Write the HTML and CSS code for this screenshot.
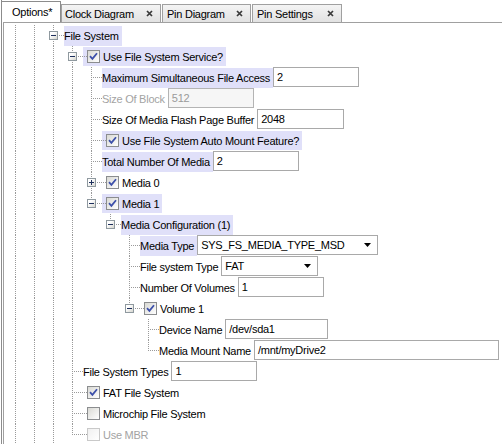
FILE: index.html
```html
<!DOCTYPE html>
<html>
<head>
<meta charset="utf-8">
<link rel="stylesheet" href="styles.css">
</head>
<body>
<div class="frame">
  <div class="tabs">
    <div class="tab active">Options*</div>
    <div class="tab w-clock">Clock Diagram<svg class="close" viewBox="0 0 7 7"><path d="M1 1L6 6M6 1L1 6"/></svg></div>
    <div class="tab w-pind">Pin Diagram<svg class="close" viewBox="0 0 7 7"><path d="M1 1L6 6M6 1L1 6"/></svg></div>
    <div class="tab w-pins">Pin Settings<svg class="close" viewBox="0 0 7 7"><path d="M1 1L6 6M6 1L1 6"/></svg></div>
  </div>
  <div class="panel">
    <div class="row"><span class="c v"></span><span class="c v"></span><span class="c t"><i class="x"></i></span><span class="lbl hl">File System</span></div>
    <div class="row"><span class="c v"></span><span class="c v"></span><span class="c v"></span><span class="c t"><i class="x"></i></span><span class="lbl ck hl"><span class="cb on"><svg viewBox="0 0 11 11"><path d="M2 5.2L4.4 7.8L9 2.2"/></svg></span>Use File System Service?</span></div>
    <div class="row"><span class="c v"></span><span class="c v"></span><span class="c v"></span><span class="c v"></span><span class="c t"></span><span class="lbl hl">Maximum Simultaneous File Access</span><span class="inp w86">2</span></div>
    <div class="row"><span class="c v"></span><span class="c v"></span><span class="c v"></span><span class="c v"></span><span class="c t"></span><span class="lbl dis">Size Of Block</span><span class="inp w85 dis-inp">512</span></div>
    <div class="row"><span class="c v"></span><span class="c v"></span><span class="c v"></span><span class="c v"></span><span class="c t"></span><span class="lbl">Size Of Media Flash Page Buffer</span><span class="inp w87">2048</span></div>
    <div class="row"><span class="c v"></span><span class="c v"></span><span class="c v"></span><span class="c v"></span><span class="c t"></span><span class="lbl ck hl"><span class="cb on"><svg viewBox="0 0 11 11"><path d="M2 5.2L4.4 7.8L9 2.2"/></svg></span>Use File System Auto Mount Feature?</span></div>
    <div class="row"><span class="c v"></span><span class="c v"></span><span class="c v"></span><span class="c v"></span><span class="c t"></span><span class="lbl hl">Total Number Of Media</span><span class="inp w86">2</span></div>
    <div class="row"><span class="c v"></span><span class="c v"></span><span class="c v"></span><span class="c v"></span><span class="c t"><i class="x plus"></i></span><span class="lbl ck"><span class="cb on"><svg viewBox="0 0 11 11"><path d="M2 5.2L4.4 7.8L9 2.2"/></svg></span>Media 0</span></div>
    <div class="row"><span class="c v"></span><span class="c v"></span><span class="c v"></span><span class="c v"></span><span class="c l"><i class="x"></i></span><span class="lbl ck hl"><span class="cb on"><svg viewBox="0 0 11 11"><path d="M2 5.2L4.4 7.8L9 2.2"/></svg></span>Media 1</span></div>
    <div class="row"><span class="c v"></span><span class="c v"></span><span class="c v"></span><span class="c v"></span><span class="c"></span><span class="c l"><i class="x"></i></span><span class="lbl hl">Media Configuration (1)</span></div>
    <div class="row"><span class="c v"></span><span class="c v"></span><span class="c v"></span><span class="c v"></span><span class="c"></span><span class="c"></span><span class="c t"></span><span class="lbl hl">Media Type</span><span class="inp sel w181">SYS_FS_MEDIA_TYPE_MSD<svg class="arr" viewBox="0 0 7 4"><path d="M0 0H7L3.5 4Z"/></svg></span></div>
    <div class="row"><span class="c v"></span><span class="c v"></span><span class="c v"></span><span class="c v"></span><span class="c"></span><span class="c"></span><span class="c t"></span><span class="lbl">File system Type</span><span class="inp sel w97">FAT<svg class="arr" viewBox="0 0 7 4"><path d="M0 0H7L3.5 4Z"/></svg></span></div>
    <div class="row"><span class="c v"></span><span class="c v"></span><span class="c v"></span><span class="c v"></span><span class="c"></span><span class="c"></span><span class="c t"></span><span class="lbl">Number Of Volumes</span><span class="inp w86">1</span></div>
    <div class="row"><span class="c v"></span><span class="c v"></span><span class="c v"></span><span class="c v"></span><span class="c"></span><span class="c"></span><span class="c l"><i class="x"></i></span><span class="lbl ck"><span class="cb on"><svg viewBox="0 0 11 11"><path d="M2 5.2L4.4 7.8L9 2.2"/></svg></span>Volume 1</span></div>
    <div class="row"><span class="c v"></span><span class="c v"></span><span class="c v"></span><span class="c v"></span><span class="c"></span><span class="c"></span><span class="c"></span><span class="c t"></span><span class="lbl">Device Name</span><span class="inp w103">/dev/sda1</span></div>
    <div class="row"><span class="c v"></span><span class="c v"></span><span class="c v"></span><span class="c v"></span><span class="c"></span><span class="c"></span><span class="c"></span><span class="c l"></span><span class="lbl">Media Mount Name</span><span class="inp w245">/mnt/myDrive2</span></div>
    <div class="row"><span class="c v"></span><span class="c v"></span><span class="c v"></span><span class="c t"></span><span class="lbl">File System Types</span><span class="inp w86">1</span></div>
    <div class="row"><span class="c v"></span><span class="c v"></span><span class="c v"></span><span class="c t"></span><span class="lbl ck"><span class="cb on"><svg viewBox="0 0 11 11"><path d="M2 5.2L4.4 7.8L9 2.2"/></svg></span>FAT File System</span></div>
    <div class="row"><span class="c v"></span><span class="c v"></span><span class="c v"></span><span class="c t"></span><span class="lbl ck"><span class="cb"></span>Microchip File System</span></div>
    <div class="row"><span class="c v"></span><span class="c v"></span><span class="c v"></span><span class="c l"></span><span class="lbl ck dis"><span class="cb off"></span>Use MBR</span></div>
  </div>
</div>
</body>
</html>
```
FILE: styles.css
```css
* { box-sizing: border-box; }
html, body { margin: 0; padding: 0; background: #fff; }
body {
  font-family: "Liberation Sans", Arial, sans-serif;
  font-size: 11px;
  letter-spacing: -0.25px;
  color: #000;
  overflow: hidden;
}
.frame {
  margin-left: 1px;
  border-left: 1px solid #8c8c8c;
  height: 444px;
  display: flex;
  flex-direction: column;
}
.tabs {
  display: flex;
  height: 22px;
  flex: none;
}
.tab {
  display: flex;
  align-items: center;
  flex: none;
  margin-top: 4px;
  height: 18px;
  padding-left: 3px;
  border: 1px solid #a0a0a0;
  border-bottom: none;
  background: linear-gradient(#f4f4f4, #e2e2e2);
  white-space: nowrap;
}
.tab + .tab { margin-left: 1px; }
.tab.active + .tab { margin-left: 0; }
.tab.active {
  margin-top: 1px;
  height: 21px;
  width: 59px;
  padding-left: 10px;
  border-left: none;
  border-color: #8c8c8c;
  background: #fff;
}
.w-clock { width: 100px; }
.w-pind { width: 89px; padding-left: 4px; }
.w-pins { width: 90px; padding-left: 4px; }
.close {
  width: 7px;
  height: 7px;
  margin-left: auto;
  margin-right: 7px;
  fill: none;
  stroke: #3a3a3a;
  stroke-width: 1.7;
}
.panel {
  flex: 1;
  margin-left: 1px;
  border-left: 1px solid #a0a0a0;
  border-top: 1px solid #a0a0a0;
  padding: 2px 0 0 3px;
}
.row {
  display: flex;
  align-items: center;
  height: 21px;
  white-space: nowrap;
}
.c {
  flex: none;
  position: relative;
  width: 19px;
  height: 21px;
}
.c.v::before, .c.t::before, .c.l::before {
  content: "";
  position: absolute;
  left: 8px;
  top: 0;
  width: 1px;
  height: 21px;
  background: repeating-linear-gradient(to bottom, #9a9a9a 0 1px, transparent 1px 2px);
}
.c.l::before { height: 11px; }
.c.t::after, .c.l::after {
  content: "";
  position: absolute;
  left: 9px;
  top: 10px;
  width: 10px;
  height: 1px;
  background: repeating-linear-gradient(to right, transparent 0 1px, #9a9a9a 1px 2px);
}
.x {
  position: absolute;
  z-index: 1;
  left: 4px;
  top: 6px;
  width: 9px;
  height: 9px;
  border: 1px solid #8f999f;
  background: linear-gradient(135deg, #ffffff 30%, #d6d6cf);
}
.x::before {
  content: "";
  position: absolute;
  left: 1px;
  top: 3px;
  width: 5px;
  height: 1px;
  background: #1d2f5c;
}
.x.plus::after {
  content: "";
  position: absolute;
  left: 3px;
  top: 1px;
  width: 1px;
  height: 5px;
  background: #1d2f5c;
}
.lbl {
  display: flex;
  align-items: center;
  height: 20px;
  padding-right: 3px;
}
.lbl.ck {
  position: relative;
  padding-left: 4px;
  height: 19px;
}
.lbl.ck::before {
  content: "";
  position: absolute;
  left: 0;
  top: 9px;
  width: 4px;
  height: 1px;
  background: repeating-linear-gradient(to right, transparent 0 1px, #9a9a9a 1px 2px);
}
.hl { background: #e0e0f9; }
.dis { color: #a3a3a3; }
.cb {
  flex: none;
  width: 13px;
  height: 13px;
  margin-right: 3px;
  border: 1px solid #8b8d8f;
  background: linear-gradient(135deg, #d9d9d4, #ffffff);
  display: flex;
}
.cb svg {
  width: 11px;
  height: 11px;
  fill: none;
  stroke: #3d50aa;
  stroke-width: 1.8;
}
.cb.off {
  border-color: #c9c9c9;
  background: linear-gradient(135deg, #f0f0f0, #ffffff);
}
.inp {
  flex: none;
  align-self: flex-start;
  display: flex;
  align-items: center;
  height: 20px;
  padding-left: 3px;
  border: 1px solid #a9a9a9;
  background: #fff;
}
.dis-inp { color: #9a9a9a; background: #f6f6f6; border-color: #b4b4b4; }
.sel { position: relative; }
.arr {
  width: 7px;
  height: 4px;
  margin-left: auto;
  margin-right: 6px;
  fill: #000;
}
.w85 { width: 86px; }
.w86 { width: 86px; }
.w87 { width: 87px; }
.w97 { width: 97px; }
.w103 { width: 103px; }
.w181 { width: 181px; }
.w245 { width: 245px; }
```
